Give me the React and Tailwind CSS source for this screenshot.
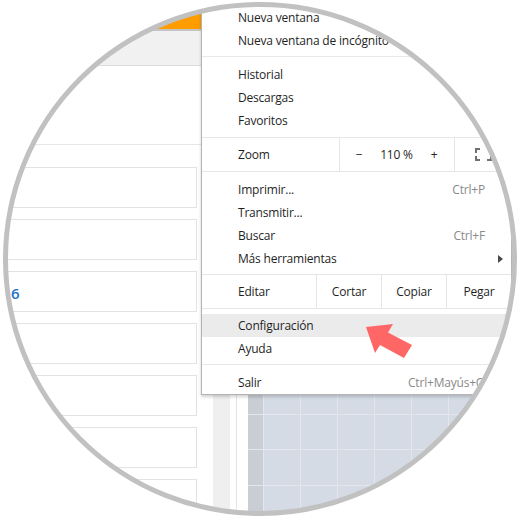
import React from "react";

const font = { fontFamily: '"Open Sans", "Noto Sans", sans-serif' };

function Item({ label, shortcut, arrow, highlight }) {
  return (
    <div
      className={
        "flex h-[23px] items-center pl-[36px] text-[12px] tracking-[-0.2px] text-[#1f1f1f] " +
        (arrow ? "pr-[8px] " : "pr-[26px] ") +
        (highlight ? "bg-[#ebebeb]" : "")
      }
    >
      <span className="flex-1 whitespace-nowrap">{label}</span>
      {shortcut && <span className="text-[#8a8a8a] whitespace-nowrap">{shortcut}</span>}
      {arrow && (
        <svg width="5" height="8" viewBox="0 0 5 8">
          <path d="M0 0 L5 4 L0 8 Z" fill="#4a4a4a" />
        </svg>
      )}
    </div>
  );
}

function Sep() {
  return <div className="h-[1px] bg-[#e9e9e9] mt-[4px] mb-[6px]" />;
}

function Card({ children }) {
  return (
    <div className="h-[41px] w-[197px] shrink-0 border border-[#e2e2e2] bg-white flex items-center pl-[10px]">
      {children}
    </div>
  );
}

function TileRow() {
  return (
    <div className="flex h-[37px] border-t border-[#e3e7ed]">
      <div className="w-[15px] shrink-0 bg-[#c9cdd4]" />
      {[0, 1, 2, 3, 4, 5, 6].map((i) => (
        <div key={i} className="w-[37px] shrink-0 border-l border-[#e3e7ed] bg-[#d5dbe5]" />
      ))}
    </div>
  );
}

export default function App() {
  return (
    <div className="relative w-[520px] h-[520px] bg-white overflow-hidden" style={font}>
      {/* lens content */}
      <div className="relative w-[520px] h-[520px] [clip-path:circle(254px_at_260px_259px)] flex bg-white">
        {/* left page column */}
        <div className="w-[213px] shrink-0 flex flex-col">
          <div className="h-[30px] bg-[#ff9c00]" />
          <div className="h-[2px] bg-[#c4c4c4]" />
          <div className="h-[35px] bg-[#f1f1f1] border-b border-[#dcdcdc]" />
          <div className="h-[81px] border-b border-[#e6e6e6] w-[202px]" />
          <div className="flex flex-col gap-[11px] pt-[22px]">
            <Card />
            <Card />
            <Card>
              <span className="text-[15px] font-semibold text-[#2471c9] leading-none pt-[3px]">6</span>
            </Card>
            <Card />
            <Card />
            <Card />
            <Card />
          </div>
        </div>
        {/* scroll strip */}
        <div className="w-[17px] shrink-0 bg-[#efefef]" />
        <div className="w-[18px] shrink-0 flex">
          <div className="w-[6px]" />
          <div className="w-[1px] bg-[#e4e4e4]" />
        </div>
        {/* image area with tiles */}
        <div className="flex-1 flex flex-col bg-[#d5dbe5]">
          <div className="h-[378px] shrink-0" />
          <TileRow />
          <TileRow />
          <TileRow />
          <TileRow />
        </div>

        {/* Chrome menu */}
        <div className="absolute left-[201px] top-[-10px] w-[311px] bg-white border border-[#b4b4b4] shadow-[0_2px_3px_rgba(0,0,0,0.18)] pt-[15px]">
          <Item label="Nueva ventana" shortcut="Ctrl+N" />
          <Item label="Nueva ventana de incógnito" shortcut="Ctrl+Mayús+N" />
          <Sep />
          <Item label="Historial" shortcut="" />
          <Item label="Descargas" shortcut="Ctrl+J" />
          <Item label="Favoritos" />
          {/* zoom row */}
          <div className="mt-[5px] flex h-[35px] border-y border-[#e6e6e6] text-[12px] tracking-[-0.2px] text-[#1f1f1f]">
            <div className="flex-1 flex items-center pl-[36px]">Zoom</div>
            <div className="w-[115px] flex border-l border-[#e6e6e6]">
              <div className="w-[38px] flex items-center justify-center">−</div>
              <div className="w-[37px] flex items-center justify-center whitespace-nowrap">110 %</div>
              <div className="w-[38px] flex items-center justify-center">+</div>
            </div>
            <div className="w-[57px] flex items-center justify-center border-l border-[#e6e6e6]">
              <svg width="17" height="13" viewBox="0 0 17 13" fill="none" stroke="#707070" strokeWidth="2">
                <path d="M1 5 V1 H5" />
                <path d="M12 1 H16 V5" />
                <path d="M16 8 V12 H12" />
                <path d="M5 12 H1 V8" />
              </svg>
            </div>
          </div>
          <div className="h-[6px]" />
          <Item label="Imprimir..." shortcut="Ctrl+P" />
          <Item label="Transmitir..." />
          <Item label="Buscar" shortcut="Ctrl+F" />
          <Item label="Más herramientas" arrow />
          {/* edit row */}
          <div className="mt-[4px] flex h-[35px] border-y border-[#e6e6e6] text-[12px] tracking-[-0.2px] text-[#1f1f1f]">
            <div className="flex-1 flex items-center pl-[36px]">Editar</div>
            <div className="w-[65px] flex items-center justify-center border-l border-[#e6e6e6]">Cortar</div>
            <div className="w-[65px] flex items-center justify-center border-l border-[#e6e6e6]">Copiar</div>
            <div className="w-[65px] flex items-center justify-center border-l border-[#e6e6e6]">Pegar</div>
          </div>
          <div className="h-[5px]" />
          <Item label="Configuración" highlight />
          <Item label="Ayuda" />
          <Sep />
          <Item label="Salir" shortcut="Ctrl+Mayús+Q" />
        </div>
      </div>

      {/* magnifier ring */}
      <div className="absolute left-[3px] top-[2px] w-[514px] h-[514px] rounded-full border-[5px] border-[#c1c1c1]" />

      {/* red pointer arrow */}
      <svg className="absolute left-0 top-0" width="520" height="520" viewBox="0 0 520 520">
        <polygon
          points="366,327 393,324 388,332.5 412,345 404,358 380,345 375,353"
          fill="#ff6666"
        />
      </svg>
    </div>
  );
}
